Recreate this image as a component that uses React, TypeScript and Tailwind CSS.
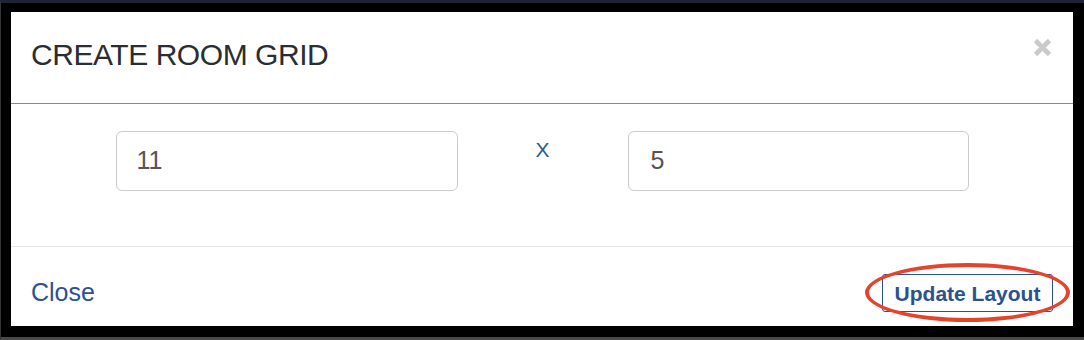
import React from 'react';

export default function App() {
  return (
    <div
      className="w-[1084px] h-[340px] bg-black border-t-[3px] border-t-[#1c2535] border-b-[3px] border-b-[#494949] border-l border-l-[#333] pt-[9px] pl-[10px] pr-[11px]"
      style={{ fontFamily: '"Liberation Sans", Arial, sans-serif' }}
    >
      <div className="w-full h-[314px] bg-white flex flex-col">
        {/* Header */}
        <div className="relative h-[92px] border-b border-[#cf705b] flex items-center px-[20px] pb-[6px]">
          <h2 className="text-[30px] leading-none text-[#2a2d31] tracking-[-0.45px]">CREATE ROOM GRID</h2>
          <button className="absolute right-[21px] top-[26px] w-[19px] h-[19px]">
            <svg viewBox="0 0 19 19" width="19" height="19">
              <path d="M2.5 2.5 L16.5 16.5 M16.5 2.5 L2.5 16.5" stroke="#cacaca" strokeWidth="4.6" />
            </svg>
          </button>
        </div>

        {/* Body */}
        <div className="h-[143px] border-b border-[#e5e5e5] pt-[27px] flex justify-center">
          <div className="w-[342px] h-[60px] border border-[#cccccc] rounded-[6px] flex items-center pl-[20px] text-[25px] text-[#555]">
            11
          </div>
          <div className="w-[170px] pt-[8px] text-center text-[21px] leading-none text-[#2f5a96]">X</div>
          <div className="w-[341px] h-[60px] border border-[#cccccc] rounded-[6px] flex items-center pl-[22px] text-[25px] text-[#555]">
            5
          </div>
        </div>

        {/* Footer */}
        <div className="flex-1 flex items-center justify-between px-[20px] pt-[13px]">
          <span className="text-[25px] text-[#2c5190]">Close</span>
          <div className="relative">
            <button className="h-[38px] w-[171px] border border-[#2c5190] rounded-[3px] text-[21px] font-bold text-[#2c5190] leading-none">
              Update Layout
            </button>
            <div className="absolute -left-[17px] -right-[17px] -top-[11px] -bottom-[10px] border-[4px] border-[#e5432b] rounded-[50%]"></div>
          </div>
        </div>
      </div>
    </div>
  );
}
